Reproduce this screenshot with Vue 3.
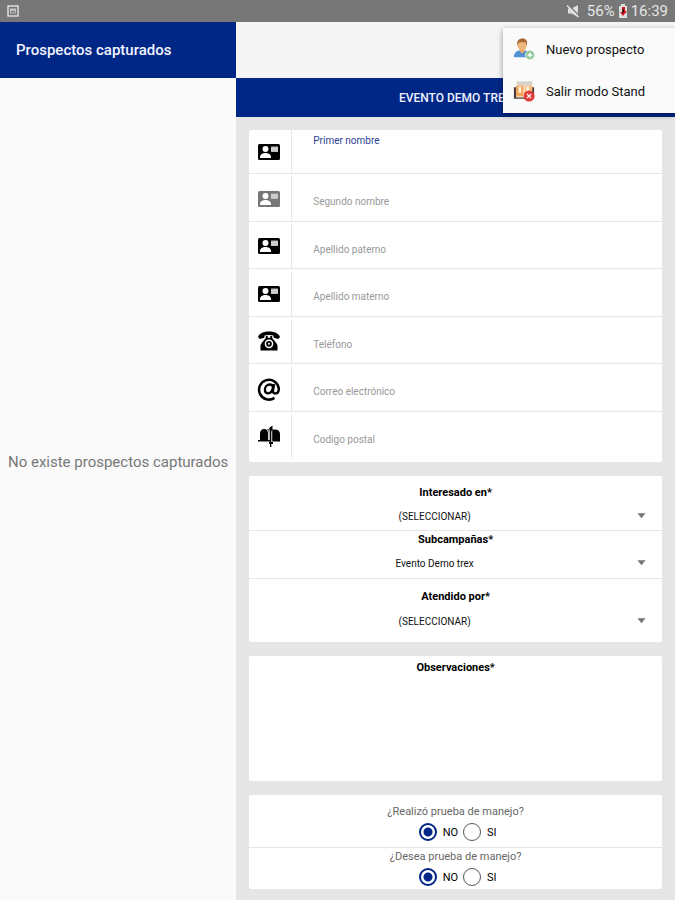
<script setup>
import { ref, reactive } from 'vue'

const fields = reactive([
  { id: 'primer', label: 'Primer nombre', icon: 'card', active: true, value: '' },
  { id: 'segundo', label: 'Segundo nombre', icon: 'card', muted: true, value: '' },
  { id: 'paterno', label: 'Apellido paterno', icon: 'card', value: '' },
  { id: 'materno', label: 'Apellido materno', icon: 'card', value: '' },
  { id: 'telefono', label: 'Teléfono', icon: 'phone', value: '' },
  { id: 'correo', label: 'Correo electrónico', icon: 'at', value: '' },
  { id: 'postal', label: 'Codigo postal', icon: 'mailbox', value: '' },
])

const choices = [
  { id: 'interes', label: 'Interesado en*', option: '(SELECCIONAR)' },
  { id: 'subcampana', label: 'Subcampañas*', option: 'Evento Demo trex' },
  { id: 'atendido', label: 'Atendido por*', option: '(SELECCIONAR)' },
]

const questions = reactive([
  { id: 'realizo', text: '¿Realizó prueba de manejo?', answer: 'NO' },
  { id: 'desea', text: '¿Desea prueba de manejo?', answer: 'NO' },
])

const notes = ref('')
</script>

<template>
  <div class="screen">
    <header class="status">
      <svg class="shot" viewBox="0 0 12 12" aria-hidden="true">
        <rect x="1" y="1" width="10" height="10" fill="none" stroke="#e4e4e4" stroke-width="1.4" />
        <path d="M3 3.500h6v5H3z" fill="#c4c4c4" />
        <path d="M3.500 7.500l2-2 1.200 1.200 1-.8 1 1.600z" fill="#666" />
      </svg>
      <div class="status-right">
        <svg class="mute" viewBox="0 0 14 14" aria-hidden="true">
          <path d="M2 4.500h3.500L12 1v12L5.500 9.500H2z" fill="#e0e0e0" />
          <path d="M2 .5l12 12" stroke="#777" stroke-width="1.400" />
          <path d="M1 1.500l11.500 11.500" stroke="#e0e0e0" stroke-width="1.600" />
        </svg>
        <span class="percent">56%</span>
        <svg class="battery" viewBox="0 0 10 14" aria-hidden="true">
          <path d="M3 0h4v2h2v12H1V2h2z" fill="#dedede" />
          <path d="M4 3h3v4h2l-4 5-3-4h2z" fill="#d3141c" />
          <path d="M4 5h2v4H4z" fill="#5b1010" />
        </svg>
        <span>16:39</span>
      </div>
    </header>

    <div class="panes">
      <aside class="side">
        <h1 class="side-title">Prospectos capturados</h1>
        <p class="empty">No existe prospectos capturados</p>
      </aside>

      <main class="main">
        <div class="toolbar"></div>
        <h2 class="banner">EVENTO DEMO TREX</h2>

        <form class="form" @submit.prevent>
          <section class="card fields">
            <div v-for="f in fields" :key="f.id" class="row">
              <div class="icon-cell" :class="{ muted: f.muted }">
                <svg v-if="f.icon === 'card'" viewBox="0 0 24 24" aria-hidden="true">
                  <rect x="1" y="4" width="22" height="16" rx="1.500" fill="currentColor" />
                  <circle cx="8.500" cy="9" r="3" fill="#fff" />
                  <path d="M3 18v-1c0-2.600 3-4 5.500-4s5.500 1.400 5.500 4v1z" fill="#fff" />
                  <path d="M14 6.500h7V12h-7z" fill="#bdbdbd" />
                  <path d="M14 8.300h7M14 10.200h7" stroke="#eee" stroke-width=".6" />
                </svg>
                <svg v-else-if="f.icon === 'phone'" viewBox="0 0 24 24" aria-hidden="true">
                  <path d="M1 8C2 4.300 7 2.500 12 2.500s10 1.800 11 5.500l-1.800 2-4.500-1.200-.3-2.300C14 5.700 10 5.700 7.600 6.500l-.3 2.300L2.800 10z" fill="currentColor" />
                  <path d="M8.800 7h1.900v1.800h2.600V7h1.900v2c1.200 1.800 4.800 4.800 5.300 7.700v4.800h-17v-4.800C4 13.800 7.600 10.800 8.800 9z" fill="currentColor" />
                  <circle cx="12" cy="14.800" r="3.600" fill="none" stroke="#fff" stroke-width="1.500" />
                  <circle cx="12" cy="14.800" r="1" fill="#fff" />
                </svg>
                <svg v-else-if="f.icon === 'at'" viewBox="0 0 24 24" fill="none" stroke="currentColor" aria-hidden="true">
                  <path d="M17.500 20.900A9.900 9.900 0 1 1 21.800 11.500c0 3-1.500 5-3.500 5-1.900 0-2.600-1.300-2.300-3.300L17 7" stroke-width="2.500" />
                  <path d="M16 10.500c-.2-2-1.500-3-3.200-3-2.800 0-4.900 2.400-4.900 5.200 0 2.200 1.300 3.600 3.200 3.600 2.500 0 4.400-2.500 4.900-5.800z" stroke-width="2.300" />
                </svg>
                <svg v-else viewBox="0 0 24 24" fill="currentColor" aria-hidden="true">
                  <path d="M3 15.500V8.500C3 6 4.700 4 7 4s4 2 4 4.500v7z" />
                  <path d="M9 4h3.500v11.500h-.8V8.500C11.700 6.500 10.800 4.800 9 4z" opacity=".6" />
                  <path d="M15.200 4.500h3.300C21 4.500 23 6.500 23 9v7.500h-7.800z" />
                  <path d="M13 6h1.300v16H13z" />
                  <path d="M12 3l3.500-2.500V5L13.500 7z" />
                  <path d="M1 15h12.500v1.500H1zM12 17h4v2h-4z" />
                </svg>
              </div>
              <div class="field" :class="{ active: f.active }">
                <label :for="f.id">{{ f.value && !f.active ? '' : f.label }}</label>
                <input :id="f.id" v-model="f.value" type="text" />
              </div>
            </div>
          </section>

          <section class="card choices">
            <div v-for="c in choices" :key="c.id" class="choice">
              <label :for="c.id">{{ c.label }}</label>
              <div class="select-wrap">
                <select :id="c.id">
                  <option>{{ c.option }}</option>
                </select>
                <svg viewBox="0 0 10 6" aria-hidden="true"><path d="M0.500 0h9L5 5.500z" fill="#757575" /></svg>
              </div>
            </div>
          </section>

          <section class="card notes">
            <label for="observaciones">Observaciones*</label>
            <textarea id="observaciones" v-model="notes"></textarea>
          </section>

          <section class="card questions">
            <fieldset v-for="q in questions" :key="q.id">
              <legend>{{ q.text }}</legend>
              <div class="answers">
                <label v-for="a in ['NO', 'SI']" :key="a">
                  <input v-model="q.answer" type="radio" :name="q.id" :value="a" />
                  <span>{{ a }}</span>
                </label>
              </div>
            </fieldset>
          </section>
        </form>
      </main>
    </div>

    <nav class="menu">
      <button type="button">
        <svg viewBox="0 0 24 24" aria-hidden="true">
          <path d="M1 21c0-5 2.500-7 6-7.500h6c3.500.5 5.500 2.500 5.500 7.500z" fill="#5591d6" />
          <path d="M7.500 12h5v3L10 17l-2.500-2z" fill="#e9a568" />
          <ellipse cx="10" cy="8" rx="4.800" ry="6" fill="#efb67c" />
          <path d="M5 8.500C3.500 3 6.500.5 10.300.5S16.500 3 15 8.500l-1.300-4C10.500 5 8 4 6.500 5z" fill="#a5672d" />
          <circle cx="18.500" cy="18.500" r="4.900" fill="#8fc79a" stroke="#d8eddb" />
          <path d="M16 18.500h5M18.500 16v5" stroke="#fff" stroke-width="1.600" />
        </svg>
        <span>Nuevo prospecto</span>
      </button>
      <button type="button">
        <svg viewBox="0 0 24 24" aria-hidden="true">
          <path d="M1 8h2.500v11H20V8h3v12.500H1z" fill="#4c3a35" />
          <path d="M4 1.500h17V6H4z" fill="#d9d2cc" />
          <path d="M3.500 6h8v12h-8z" fill="#f3a557" />
          <path d="M12.500 6H21v12h-8.500z" fill="#f5bd7c" />
          <path d="M6 7h3v7H6zM14.500 7h3v6h-3z" fill="#fff0dc" />
          <circle cx="17.500" cy="17.500" r="6" fill="#df3c37" />
          <path d="M15.300 15.300l4.400 4.400m0-4.400l-4.400 4.400" stroke="#fff" stroke-width="1.300" />
        </svg>
        <span>Salir modo Stand</span>
      </button>
    </nav>
  </div>
</template>

<style>
body {
  margin: 0;
  background: #e6e6e6;
}
</style>

<style scoped>
* {
  box-sizing: border-box;
}
.screen {
  position: relative;
  display: flex;
  flex-direction: column;
  min-height: 100vh;
  font-family: Roboto, "Liberation Sans", sans-serif;
  color: #111;
}
.status {
  display: flex;
  align-items: center;
  justify-content: space-between;
  height: 22px;
  padding: 0 7px;
  background: #777;
  color: #e6e6e6;
  font-size: 15px;
}
.shot {
  width: 12px;
  height: 12px;
}
.status-right {
  display: flex;
  align-items: center;
  gap: 3px;
}
.mute {
  width: 14px;
  height: 14px;
  margin-right: 4px;
}
.battery {
  width: 10px;
  height: 14px;
}
.panes {
  flex: 1;
  display: grid;
  grid-template-columns: 35fr 65fr;
}
.side {
  display: flex;
  flex-direction: column;
  background: #fafafa;
}
.side-title {
  display: flex;
  align-items: center;
  height: 56px;
  margin: 0;
  padding: 0 16px;
  background: #002686;
  color: #f2f4ff;
  font-size: 15px;
  font-weight: 500;
}
.empty {
  flex: 1;
  display: flex;
  align-items: center;
  justify-content: center;
  margin: 0;
  padding-bottom: 56px;
  color: #777;
  font-size: 15px;
  white-space: nowrap;
}
.main {
  min-width: 0;
  background: #e6e6e6;
}
.toolbar {
  height: 56px;
  background: #f5f5f5;
}
.banner {
  display: flex;
  align-items: center;
  justify-content: center;
  height: 39px;
  margin: 0;
  background: #002686;
  color: #eef1ff;
  font-size: 12px;
  font-weight: 500;
}
.form {
  display: flex;
  flex-direction: column;
  gap: 14px;
  padding: 13px 13px 12px;
}
.card {
  background: #fff;
  border-radius: 2px;
}
.row {
  display: grid;
  grid-template-columns: 42px 1fr;
  height: 47px;
  border-bottom: 1px solid #e6e6e6;
}
.row:nth-child(even) {
  height: 48px;
}
.row:first-child {
  height: 44px;
}
.row:last-child {
  height: 50px;
  padding-bottom: 3px;
  border-bottom: 0;
}
.icon-cell {
  display: flex;
  align-items: center;
  justify-content: center;
  padding: 2px 2px 0 0;
}
.row:first-child .icon-cell {
  padding-top: 0;
}
.icon-cell svg {
  width: 24px;
  height: 24px;
  color: #000;
}
.icon-cell.muted svg {
  color: #777;
}
.field {
  display: grid;
  margin-top: 3px;
  padding-left: 21px;
  border-left: 1px solid #e6e6e6;
}
.field label {
  grid-area: 1 / 1;
  align-self: center;
  padding-top: 6px;
  color: #999;
  font-size: 10px;
  line-height: 12px;
}
.field input {
  grid-area: 1 / 1;
  width: 100%;
  min-width: 0;
  padding: 12px 0 0;
  border: 0;
  outline: 0;
  background: none;
  font: inherit;
  font-size: 12px;
}
.field.active {
  margin-top: 0;
}
.field.active label {
  align-self: start;
  padding-top: 5px;
  color: #2b3f94;
}
.choice {
  display: flex;
  flex-direction: column;
  align-items: center;
  height: 48px;
  border-bottom: 1px solid #e6e6e6;
}
.choice:first-child {
  height: 55px;
  padding-top: 8px;
}
.choice:last-child {
  height: 63px;
  padding-top: 8px;
  border-bottom: 0;
}
.choice label,
.notes label {
  color: #000;
  font-size: 11px;
  font-weight: 700;
  line-height: 18px;
}
.choice:last-child label {
  line-height: 20px;
}
.select-wrap {
  display: grid;
  grid-template-columns: 1fr 42px;
  align-items: center;
  width: 100%;
  height: 28px;
}
.select-wrap select {
  grid-area: 1 / 1 / 2 / 3;
  width: 100%;
  height: 28px;
  padding: 0 42px 0 0;
  appearance: none;
  border: 0;
  background: none;
  color: #111;
  font: inherit;
  font-size: 10px;
  text-align: center;
  text-align-last: center;
}
.select-wrap svg {
  grid-area: 1 / 2;
  justify-self: center;
  width: 9px;
  height: 6px;
  pointer-events: none;
}
.notes {
  display: flex;
  flex-direction: column;
  align-items: center;
  height: 125px;
  padding-top: 3px;
}
.notes textarea {
  flex: 1;
  width: 100%;
  padding: 4px 12px;
  border: 0;
  outline: 0;
  resize: none;
  background: none;
  font: inherit;
  font-size: 12px;
}
.questions fieldset {
  display: flex;
  flex-direction: column;
  align-items: center;
  min-width: 0;
  margin: 0;
  padding: 0;
  border: 0;
}
.questions fieldset:first-child {
  padding-bottom: 3px;
  border-bottom: 1px solid #e6e6e6;
}
.questions legend {
  margin: 0 auto;
  padding: 0;
  color: #666;
  font-size: 11px;
  line-height: 17px;
}
.questions fieldset:first-child legend {
  padding-top: 8px;
}
.answers {
  display: flex;
  gap: 5px;
  padding-left: 4px;
}
.answers label {
  display: flex;
  align-items: center;
  gap: 6px;
  height: 24px;
  color: #000;
  font-size: 11px;
}
.answers input {
  width: 18px;
  height: 18px;
  margin: 0;
  appearance: none;
  border: 1px solid #555;
  border-radius: 50%;
  background: #fff;
}
.answers input:checked {
  border: 2px solid #002686;
  background: radial-gradient(circle, #002686 0 4px, #fff 5px);
}
.menu {
  position: absolute;
  top: 28px;
  right: 0;
  display: flex;
  flex-direction: column;
  width: 172px;
  padding-bottom: 1px;
  background: #fafafa;
  box-shadow: 0 2px 6px rgba(0, 0, 0, 0.4);
}
.menu button {
  display: flex;
  align-items: center;
  gap: 11px;
  height: 42px;
  padding: 0 10px;
  border: 0;
  background: none;
  color: #111;
  font: inherit;
  font-size: 13px;
  white-space: nowrap;
}
.menu svg {
  flex: none;
  width: 22px;
  height: 22px;
}
</style>
